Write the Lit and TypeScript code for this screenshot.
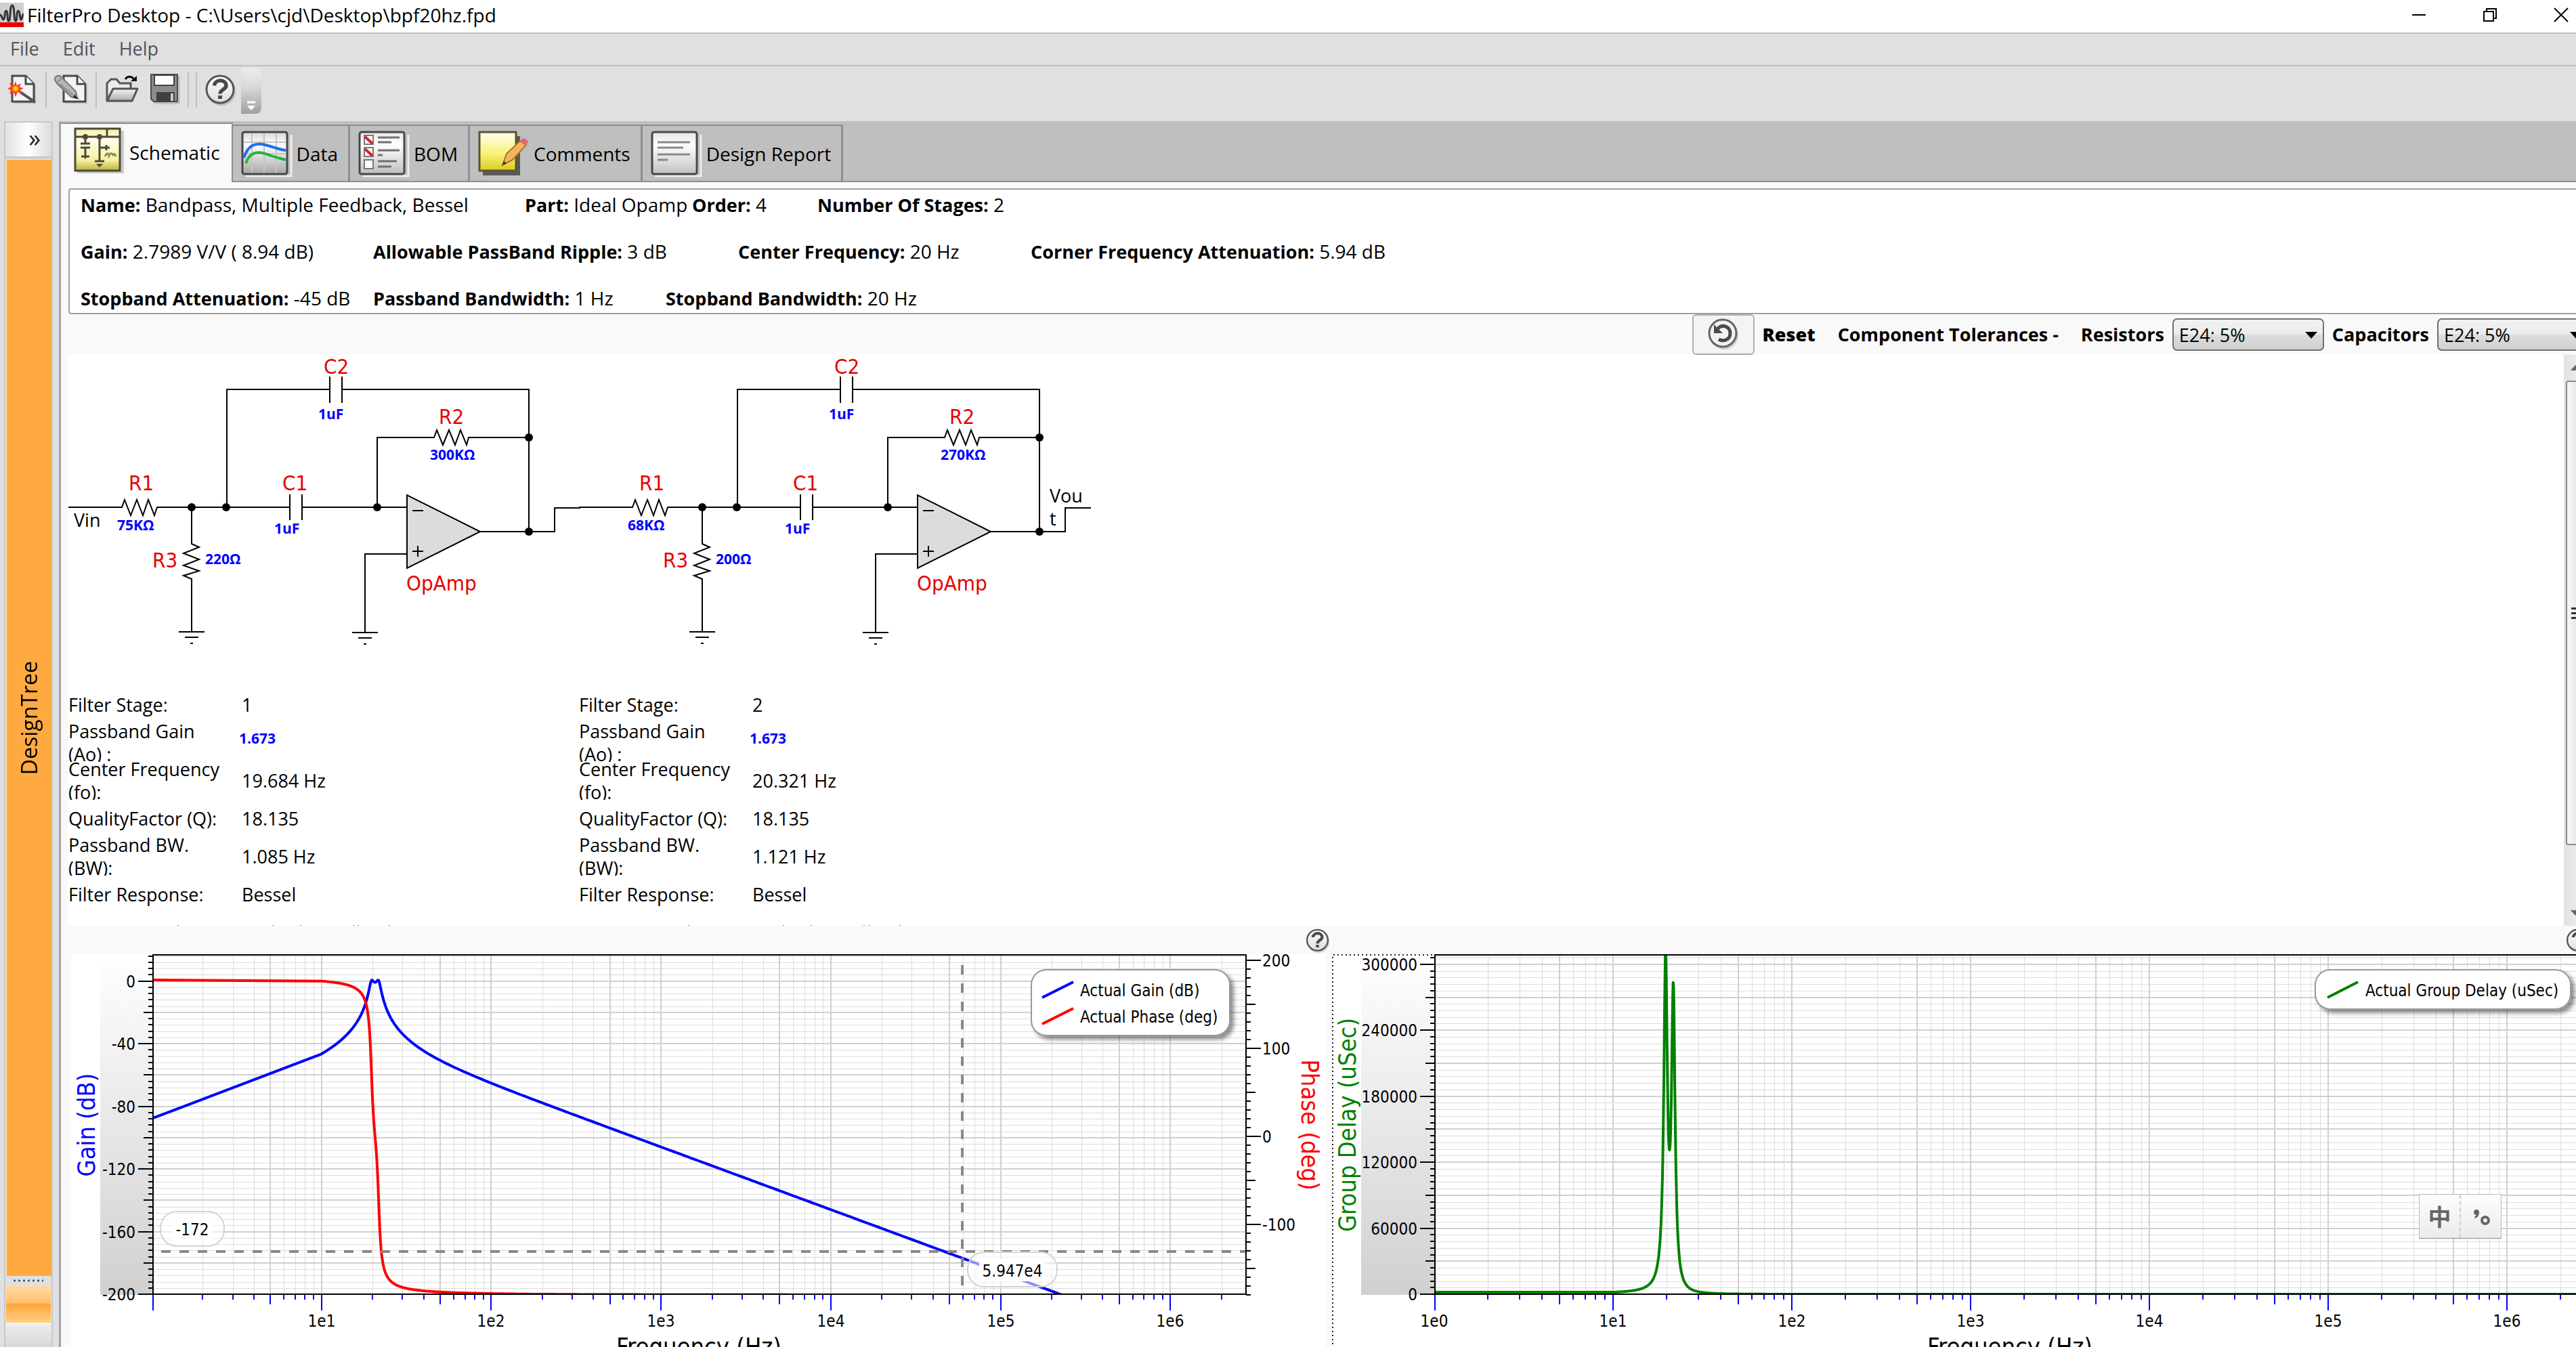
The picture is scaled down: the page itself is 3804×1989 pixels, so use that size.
import { LitElement, html, svg, css } from "lit";
import { customElement, property } from "lit/decorators.js";

const FONT = css`"Open Sans", "Noto Sans", "Noto Sans CJK SC", sans-serif`;
const TAHOMA = css`"DejaVu Sans Condensed", "Noto Sans", sans-serif`;

/* ---------- filter model ---------- */

const Q = 18.135;
const STAGE_FREQS = [19.68, 21.74];

const detune = (f: number, f0: number) => Q * (f / f0 - f0 / f);
const gainDb = (f: number) =>
  STAGE_FREQS.reduce((s, f0) => s - 10 * Math.log10(1 + detune(f, f0) ** 2), 11.8);
const phaseDeg = (f: number) =>
  STAGE_FREQS.reduce((s, f0) => s - (Math.atan(detune(f, f0)) * 180) / Math.PI, 0);
const delayUs = (f: number) =>
  STAGE_FREQS.reduce(
    (s, f0) => s + (1e6 * Q * (1 / f0 + f0 / (f * f))) / (1 + detune(f, f0) ** 2) / (2 * Math.PI),
    0
  );

function curve(
  fn: (f: number) => number,
  xOf: (f: number) => number,
  yOf: (v: number) => number,
  start: [number, number],
  maxExp: number
): string {
  const pts = [`${start[0]},${start[1]}`];
  for (let e = 1; e <= maxExp; e += e < 1.6 ? 0.002 : 0.02) {
    const f = 10 ** e;
    pts.push(`${xOf(f).toFixed(1)},${yOf(fn(f)).toFixed(1)}`);
  }
  return pts.join(" ");
}

/* ---------- icons ---------- */

const pageShape = (x: number) => svg`
  <path d="M${x + 2} 8H${x + 23}L${x + 35} 20V46H${x + 2}Z" fill="#999" opacity=".35"/>
  <path d="M${x} 5H${x + 20}L${x + 32} 17V43H${x}Z" fill="#f4f4f4" stroke="#4a4a4a" stroke-width="3"/>
  <path d="M${x + 20} 5V17H${x + 32}" fill="#fff" stroke="#4a4a4a" stroke-width="3"/>`;

const helpMark = (id: string) => html`
  <svg class="help-mark" viewBox="0 0 52 52" aria-hidden="true">
    <defs>
      <linearGradient id=${id} x1="0" y1="0" x2="0" y2="1">
        <stop offset="0" stop-color="#fff" /><stop offset="1" stop-color="#ddd" />
      </linearGradient>
    </defs>
    <circle cx="26" cy="28" r="21" fill="#999" opacity=".45" />
    <circle cx="24" cy="25" r="20" fill="url(#${id})" stroke="#555" stroke-width="3" />
    <path d="M15.500 19.500C16 9.500 33 9.500 33 19.500C33 25 24 25 24 31.500" fill="none" stroke="#4a4a4a" stroke-width="5.500" />
    <rect x="21" y="34" width="6" height="5" fill="#4a4a4a" />
  </svg>`;

const toolIcons = {
  new: html`<svg viewBox="0 0 52 52" aria-hidden="true">
    ${pageShape(13)}
    <path d="M25 29L47 44" stroke="#555" stroke-width="4" />
    <path d="M18 13L20 19L26 16L24 21.500L30 23L25 26L28 32L21 29L18 36L15 29L9 32L11 26L6 24L11 21L9 15L15.500 19Z" fill="#ff3b30" />
    <circle cx="18" cy="24" r="4" fill="#ffe600" stroke="#ff7a00" stroke-width="2" />
  </svg>`,
  edit: html`<svg viewBox="0 0 52 52" aria-hidden="true">
    ${pageShape(15)}
    <path d="M2 11C1 6 7 3 11 6L33 28L35 38L26 36L5 16Z" fill="#b5b5b5" stroke="#777" stroke-width="2" />
    <path d="M6 14L13 8M9 17L28 33" stroke="#8a8a8a" stroke-width="2" />
    <path d="M31 34L35 38L30 37Z" fill="#333" stroke="#333" stroke-width="2" />
  </svg>`,
  open: html`<svg viewBox="0 0 52 52" aria-hidden="true">
    <defs>
      <linearGradient id="folder" x1="0" y1="0" x2="0" y2="1">
        <stop offset="0" stop-color="#f6f6f6" /><stop offset="1" stop-color="#aaa" />
      </linearGradient>
    </defs>
    <path d="M5 42V16L11 10H19L24 16H40V24" fill="#ececec" stroke="#555" stroke-width="3" />
    <path d="M5 42L14 24H50L42 42Z" fill="url(#folder)" stroke="#555" stroke-width="3" stroke-linejoin="round" />
    <path d="M32 10C35 5 41 5 45 10" fill="none" stroke="#111" stroke-width="3" />
    <path d="M49 5V13H40Z" fill="#111" />
  </svg>`,
  save: html`<svg viewBox="0 0 52 52" aria-hidden="true">
    <path d="M10 6H51V47H12Z" fill="#999" opacity=".4" />
    <path d="M8 3H47V43H12L8 39Z" fill="#8c8c8c" stroke="#4a4a4a" stroke-width="2" />
    <rect x="13" y="4" width="29" height="15" fill="#fff" stroke="#444" stroke-width="2" />
    <rect x="16" y="29" width="27" height="14" fill="#404040" />
    <rect x="37" y="31" width="4" height="11" fill="#c8c8c8" />
  </svg>`,
};

const paperDefs = (id: string, a: string, b: string) => svg`
  <defs><linearGradient id=${id} x1="0" y1="0" x2="0" y2="1">
    <stop offset="0" stop-color=${a}/><stop offset=".3" stop-color="#fff" stop-opacity=".9"/><stop offset="1" stop-color=${b}/>
  </linearGradient></defs>`;

const tabIcons = {
  schematic: html`<svg viewBox="0 0 72 68" aria-hidden="true">
    <defs><linearGradient id="sch" x1="0" y1="0" x2="0" y2="1">
      <stop offset="0" stop-color="#f5efa0" /><stop offset=".25" stop-color="#fffef0" />
      <stop offset=".75" stop-color="#f6f1a0" /><stop offset="1" stop-color="#bdb03c" />
    </linearGradient></defs>
    <rect x="5" y="5" width="69" height="63" fill="#888" opacity=".4" />
    <rect x="2" y="2" width="66" height="62" fill="url(#sch)" stroke="#4a4a3c" stroke-width="3" />
    <path d="M2 14H68M49 2V14M17 14V24M10 24H24M10 30H24M17 30V43M11 43H23M38 14V51M31 50H45M38 30H53M48 26V34" fill="none" stroke="#4f4a33" stroke-width="3" />
    <circle cx="17" cy="14" r="4" fill="#4f4a33" /><circle cx="38" cy="14" r="4" fill="#4f4a33" />
    <path d="M33 54H43L38 59ZM14 43H20L17 47Z" fill="#4f4a33" />
    <path d="M46 43C49 37 51 38 52 42C54 37 57 38 58 42C59 38 61 39 62 43" fill="none" stroke="#8f8a5a" stroke-width="3" />
  </svg>`,
  data: html`<svg viewBox="0 0 72 68" aria-hidden="true">
    ${paperDefs("dat", "#d8d8d8", "#a5a5a5")}
    <path d="M6 67H74V6" fill="none" stroke="#eee" stroke-width="3" />
    <rect x="2" y="2" width="66" height="62" rx="3" fill="#f3f3f3" />
    <rect x="2" y="2" width="66" height="62" rx="3" fill="url(#dat)" stroke="#484848" stroke-width="3" />
    <path d="M16 4V62M34 4V62M52 4V62M4 17H66M4 34H66M4 49H66" stroke="#c4c4c4" stroke-width="2" />
    <path d="M4 40C10 22 20 17 36 21C48 24 56 28 66 29" fill="none" stroke="#1c6ef2" stroke-width="4" />
    <path d="M7 48C12 34 21 29 36 34C48 39 56 40 66 43" fill="none" stroke="#24b53a" stroke-width="4" />
  </svg>`,
  bom: html`<svg viewBox="0 0 72 68" aria-hidden="true">
    ${paperDefs("bom", "#e8e8e8", "#bdbdbd")}
    <path d="M6 67H74V6" fill="none" stroke="#eee" stroke-width="3" />
    <rect x="2" y="2" width="66" height="62" rx="3" fill="#f3f3f3" />
    <rect x="2" y="2" width="66" height="62" rx="3" fill="url(#bom)" stroke="#484848" stroke-width="3" />
    <g fill="#fff" stroke="#777" stroke-width="2">
      <rect x="9" y="7" width="13" height="13" /><rect x="9" y="25" width="13" height="13" /><rect x="9" y="43" width="13" height="13" />
    </g>
    <path d="M10 9L21 19M10 27L21 37" stroke="#d8232a" stroke-width="4" />
    <path d="M29 10H61M29 17H49M29 29H61M29 36H36M29 45H57M29 53H49" stroke="#707070" stroke-width="3" />
  </svg>`,
  comments: html`<svg viewBox="0 0 72 68" aria-hidden="true">
    <defs><linearGradient id="note" x1="0" y1="0" x2="0" y2="1">
      <stop offset="0" stop-color="#fffff0" /><stop offset=".55" stop-color="#faf27a" /><stop offset="1" stop-color="#d8cc20" />
    </linearGradient></defs>
    <path d="M7 8H62V66H7Z" fill="#5a5a5a" />
    <path d="M2 2H56V59H2Z" fill="url(#note)" stroke="#5a5630" stroke-width="3" />
    <path d="M36 51L42 34L62 15L71 21L51 43Z" fill="#f2b45c" stroke="#a8742c" stroke-width="2" />
    <path d="M62 15L66 11Q73 12 74 17L71 21Z" fill="#e8667a" />
    <path d="M36 51L38 45L42 48Z" fill="#333" />
  </svg>`,
  report: html`<svg viewBox="0 0 72 68" aria-hidden="true">
    ${paperDefs("rep", "#e4e4e4", "#c0c0c0")}
    <path d="M6 67H74V6" fill="none" stroke="#eee" stroke-width="3" />
    <rect x="2" y="2" width="66" height="62" rx="3" fill="#f3f3f3" />
    <rect x="2" y="2" width="66" height="62" rx="3" fill="url(#rep)" stroke="#484848" stroke-width="3" />
    <path d="M10 17H58M10 25H48M10 35H58M10 43H25" stroke="#8a8a8a" stroke-width="3" />
  </svg>`,
};

/* ---------- schematic ---------- */

interface Stage {
  r1: string;
  r2: string;
  r3: string;
  c1: string;
  c2: string;
  rows: [string, string][];
}

const STAGES: Stage[] = [
  {
    r1: "75KΩ", r2: "300KΩ", r3: "220Ω", c1: "1uF", c2: "1uF",
    rows: [
      ["Filter Stage:", "1"],
      ["Passband Gain (Ao) :", "1.673"],
      ["Center Frequency (fo):", "19.684 Hz"],
      ["QualityFactor (Q):", "18.135"],
      ["Passband BW. (BW):", "1.085 Hz"],
      ["Filter Response:", "Bessel"],
    ],
  },
  {
    r1: "68KΩ", r2: "270KΩ", r3: "200Ω", c1: "1uF", c2: "1uF",
    rows: [
      ["Filter Stage:", "2"],
      ["Passband Gain (Ao) :", "1.673"],
      ["Center Frequency (fo):", "20.321 Hz"],
      ["QualityFactor (Q):", "18.135"],
      ["Passband BW. (BW):", "1.121 Hz"],
      ["Filter Response:", "Bessel"],
    ],
  },
];

@customElement("filter-schematic")
class FilterSchematic extends LitElement {
  static styles = css`
    :host { display: block; background: #fff; }
    .drawing { display: block; width: 1560px; height: 489px; }
    .wire { fill: none; stroke: #000; stroke-width: 2; }
    .part { font: 31px ${TAHOMA}; fill: #e60000; }
    .value { font: bold 21px ${FONT}; fill: #0000ff; }
    .port { font: 27px ${FONT}; fill: #000; }
    .stages { display: flex; font: 27px/34px ${FONT}; color: #000; }
    table { width: 754px; table-layout: fixed; border-collapse: collapse; }
    th, td { padding: 0; font-weight: 400; text-align: left; }
    th { width: 252px; }
    td { padding-left: 4px; }
    td.editable { padding-left: 0; }
    .clip { display: flex; align-items: center; height: 56px; overflow: hidden; }
    .clip.label { width: 236px; }
    .clip.gain { box-sizing: border-box; font-weight: 700; font-size: 21px; color: #0000ff; padding-bottom: 14px; }
    .cut { display: block; width: 1560px; height: 18px; }
  `;

  private stage(s: Stage, i: number) {
    const ground = (x: number, y: number) =>
      svg`<path class="wire" d="M${x - 19} ${y}H${x + 19}M${x - 10} ${y + 8}H${x + 10}M${x - 2} ${y + 17}H${x + 2}"/>`;
    return svg`<g transform="translate(${i * 754} 0)">
      <path class="wire" d="M101 749H180L184 738L193 761L202 738L211 761L219 738L228 761L232 749H428M446 749H601
        M428 730V768M446 730V768
        M335 749V575H487M505 575H781V785M487 556V595M505 556V595
        M557 749V646H641L645 635L654 657L663 635L672 657L680 635L689 657L692 646H781
        M283 749V803L294 808L271 817L294 826L271 835L294 843L271 850L283 855V933
        M709 785H819V750H857
        M601 818H539V934"/>
      <path d="M601 731V839L709 785Z" fill="#dcdcdc" stroke="#000" stroke-width="2"/>
      <path class="wire" d="M609 754H625M609 814H625M617 806V822"/>
      ${ground(283, 933)}${ground(539, 934)}
      <circle cx="283" cy="749" r="6"/><circle cx="334" cy="749" r="6"/><circle cx="557" cy="749" r="6"/>
      <circle cx="781" cy="646" r="6"/><circle cx="781" cy="785" r="6"/>
      <text class="part" x="190" y="724">R1</text><text class="value" x="173" y="783">${s.r1}</text>
      <text class="part" x="417" y="724">C1</text><text class="value" x="405" y="788">${s.c1}</text>
      <text class="part" x="478" y="552">C2</text><text class="value" x="470" y="619">${s.c2}</text>
      <text class="part" x="648" y="626">R2</text><text class="value" x="635" y="679">${s.r2}</text>
      <text class="part" x="225" y="838">R3</text><text class="value" x="303" y="833">${s.r3}</text>
      <text class="part" x="600" y="872">OpAmp</text>
    </g>`;
  }

  render() {
    const specks = [262, 402, 443, 521, 528, 574];
    return html`
      <svg class="drawing" viewBox="101 524 1560 489" role="img" aria-label="Two stage band pass filter">
        ${STAGES.map((s, i) => this.stage(s, i))}
        <text class="port" x="109" y="778">Vin</text>
        <text class="port" x="1550" y="742">Vou</text>
        <text class="port" x="1550" y="776">t</text>
      </svg>
      <div class="stages">
        ${STAGES.map(
          (s) => html`<table>
            ${s.rows.map(
              ([k, v], i) => html`<tr>
                <th scope="row"><div class="clip label">${k}</div></th>
                <td class=${i === 1 ? "editable" : ""}><div class="clip ${i === 1 ? "gain" : ""}">${v}</div></td>
              </tr>`
            )}
          </table>`
        )}
      </div>
      <svg class="cut" viewBox="101 1349 1560 18" aria-hidden="true">
        ${[0, 754].map((dx) => specks.map((x) => svg`<rect x=${x + dx} y="1366" width="2" height="1" fill="#888"/>`))}
      </svg>
    `;
  }
}

/* ---------- charts ---------- */

interface Plot {
  x0: number;
  left: number;
  right: number;
  decade: number;
}

const TOP = 1409;
const BOTTOM = 1911;
const PLOT_STYLES = css`
  :host { display: block; min-width: 0; }
  .strip { display: flex; justify-content: flex-end; height: 40px; padding: 2px 6px 0 0; }
  .help { width: 34px; height: 34px; padding: 0; border: 0; background: none; }
  .help-mark { display: block; width: 40px; height: 40px; }
  .plot { display: block; width: 100%; height: auto; }
  .tick { font: 24px ${TAHOMA}; fill: #000; }
  .title { font: 36px ${TAHOMA}; text-anchor: middle; }
  .mid { text-anchor: middle; }
  .end { text-anchor: end; }
  .minor { stroke: #dcdcdc; stroke-width: 1; fill: none; }
  .major { stroke: #d0d0d0; stroke-width: 2; fill: none; }
  .axis { stroke: #000; stroke-width: 2; fill: none; }
  .freq { stroke: #0000ff; stroke-width: 2; fill: none; }
  .trace { fill: none; stroke-width: 4; stroke-linejoin: round; }
  .cursor { fill: none; stroke: #888; stroke-width: 4; stroke-dasharray: 14 13; }
`;

function freqAxis(p: Plot) {
  let minor = "";
  let major = "";
  let ticks = "";
  for (let d = 0; d < 7; d++) {
    for (let m = 1; m < 10; m++) {
      const x = Math.round(p.x0 + p.decade * (d + Math.log10(m)));
      if (x > p.right) continue;
      const line = `M${x} ${TOP}V${BOTTOM}`;
      if (x > p.left) {
        if (m === 1 || m === 5) major += line;
        else minor += line;
      }
      ticks += `M${Math.max(x, p.left)} ${BOTTOM + 1}v${m === 1 ? 23 : m === 5 ? 14 : 7}`;
    }
  }
  return { minor, major, ticks };
}

function levelAxis(from: number, to: number, step: number, mid: number, big: number, yOf: (v: number) => number) {
  const minor: number[] = [];
  const majors: number[] = [];
  const marks: { y: number; len: number; v: number }[] = [];
  for (let v = from; v <= to; v += step) {
    const y = Math.round(yOf(v));
    const len = v % big === 0 ? 22 : v % mid === 0 ? 14 : 7;
    marks.push({ y, len, v });
    (len > 7 ? majors : minor).push(y);
  }
  return { minor, majors, marks };
}

function grid(p: Plot, yMinor: number[], yMajor: number[]) {
  const fx = freqAxis(p);
  const h = (ys: number[]) => ys.map((y) => `M${p.left} ${y}H${p.right}`).join("");
  return svg`
    <rect x=${p.left} y=${TOP} width=${p.right - p.left} height=${BOTTOM - TOP} fill="#fff"/>
    <path class="minor" shape-rendering="crispEdges" d=${h(yMinor) + fx.minor}/>
    <path class="major" d=${h(yMajor) + fx.major}/>
    <path class="freq" d=${fx.ticks}/>`;
}

const axisShade = svg`<linearGradient id="shade" x1="0" y1="0" x2="0" y2="1">
  <stop offset="0" stop-color="#fff"/><stop offset="1" stop-color="#d0d0d0"/></linearGradient>
  <filter id="drop" x="-10%" y="-20%" width="125%" height="160%">
    <feDropShadow dx="5" dy="5" stdDeviation="3" flood-color="#000" flood-opacity=".45"/></filter>`;

@customElement("gain-chart")
class GainChart extends LitElement {
  static styles = PLOT_STYLES;

  render() {
    const p: Plot = { x0: 224, left: 226, right: 1840, decade: 250.7 };
    const xOf = (f: number) => p.x0 + p.decade * Math.log10(f);
    const yGain = (v: number) => 1448.7 - v * 2.3125;
    const yPhase = (v: number) => 1677.7 - v * 1.301;
    const gain = levelAxis(-200, 16, 4, 20, 40, yGain);
    const phase = levelAxis(-180, 200, 10, 50, 100, yPhase);
    return html`
      <div class="strip"><button class="help" aria-label="Help on gain and phase">${helpMark("h1")}</button></div>
      <svg class="plot" viewBox="105 1409 1862 600" role="img" aria-label="Gain and phase over frequency">
        <defs>${axisShade}<clipPath id="area"><rect x="226" y="1409" width="1614" height="502"/></clipPath></defs>
        <rect x="105" y="1409" width="1853" height="600" fill="#fff"/>
        <rect x="148" y="1409" width="78" height="503" fill="url(#shade)"/>
        ${grid(p, gain.minor, gain.majors)}
        <path class="axis" d=${gain.marks.map((m) => `M${226 - m.len} ${m.y}H226`).join("") +
          phase.marks.map((m) => `M1840 ${m.y}h${m.len}`).join("")}/>
        ${gain.marks.filter((m) => m.len === 22).map((m) => svg`<text class="tick end" x="200" y=${m.y + 9}>${m.v}</text>`)}
        ${phase.marks.filter((m) => m.len === 22).map((m) => svg`<text class="tick" x="1864" y=${m.y + 9}>${m.v}</text>`)}
        ${[1, 2, 3, 4, 5, 6].map((d) => svg`<text class="tick mid" x=${Math.round(p.x0 + p.decade * d)} y="1959">1e${d}</text>`)}
        <g clip-path="url(#area)">
          <polyline class="trace" stroke="#0000ff" points=${curve(gainDb, xOf, yGain, [226, 1651], 6)}/>
          <polyline class="trace" stroke="#ff0000" points=${curve(phaseDeg, xOf, yPhase, [226, 1447], 6)}/>
        </g>
        <rect class="axis" x="226" y="1410" width="1614" height="501"/>
        <path class="cursor" d="M238 1848H1839"/>
        <path class="cursor" d="M1421 1425V1898"/>
        <g fill="#fff" fill-opacity=".55" stroke="#d3d3d3" stroke-width="2">
          <rect x="237" y="1789" width="94" height="51" rx="24"/>
          <rect x="1429" y="1849" width="132" height="51" rx="24"/>
        </g>
        <rect x="254" y="1798" width="60" height="34" fill="#fff"/>
        <rect x="1446" y="1859" width="97" height="33" fill="#fff"/>
        <text class="tick mid" x="284" y="1824">-172</text>
        <text class="tick mid" x="1495" y="1885">5.947e4</text>
        <rect x="1523" y="1432" width="293" height="97" rx="22" fill="#fff" stroke="#999" stroke-width="2" filter="url(#drop)"/>
        <path d="M1539 1473L1585 1450" stroke="#0000ff" stroke-width="4"/>
        <path d="M1539 1512L1585 1489" stroke="#ff0000" stroke-width="4"/>
        <text class="tick" x="1595" y="1471">Actual Gain (dB)</text>
        <text class="tick" x="1595" y="1510">Actual Phase (deg)</text>
        <text class="title" fill="#0000ff" transform="translate(140 1661) rotate(-90)">Gain (dB)</text>
        <text class="title" fill="#ff0000" transform="translate(1922 1661) rotate(90)">Phase (deg)</text>
        <text class="title" x="1032" y="2001">Frequency (Hz)</text>
      </svg>
    `;
  }
}

@customElement("delay-chart")
class DelayChart extends LitElement {
  static styles = PLOT_STYLES;

  render() {
    const p: Plot = { x0: 2118, left: 2119, right: 3828, decade: 264 };
    const xOf = (f: number) => p.x0 + p.decade * Math.log10(f);
    const yOf = (v: number) => 1911 - v * 0.001624;
    const level = levelAxis(0, 306000, 6000, 30000, 60000, yOf);
    return html`
      <div class="strip"><button class="help" aria-label="Help on group delay">${helpMark("h2")}</button></div>
      <svg class="plot" viewBox="1967 1409 1861 600" role="img" aria-label="Group delay over frequency">
        <defs>${axisShade}<clipPath id="area"><rect x="2119" y="1409" width="1709" height="502"/></clipPath></defs>
        <rect x="1967" y="1409" width="1861" height="600" fill="#fff"/>
        <rect x="2010" y="1409" width="109" height="503" fill="url(#shade)"/>
        ${grid(p, level.minor, level.majors)}
        <path d="M1968 2009V1410H3828" fill="none" stroke="#222" stroke-width="2" stroke-dasharray="2 4"/>
        <path class="axis" d=${level.marks.map((m) => `M${2119 - m.len} ${m.y}H2119`).join("")}/>
        ${level.marks.filter((m) => m.len === 22).map((m) => svg`<text class="tick end" x="2093" y=${m.y + 9}>${m.v}</text>`)}
        ${[0, 1, 2, 3, 4, 5, 6].map((d) => svg`<text class="tick mid" x=${Math.round(p.x0 + p.decade * d)} y="1959">1e${d}</text>`)}
        <polyline class="trace" clip-path="url(#area)" stroke="#008000" points=${curve(delayUs, xOf, yOf, [2119, 1908], 6.4)}/>
        <path class="axis" d="M3828 1410H2119V1911H3828"/>
        <rect x="3419" y="1432" width="377" height="58" rx="22" fill="#fff" stroke="#999" stroke-width="2" filter="url(#drop)"/>
        <path d="M3437 1473L3482 1450" stroke="#008000" stroke-width="4"/>
        <text class="tick" x="3493" y="1471">Actual Group Delay (uSec)</text>
        <text class="title" fill="#008000" transform="translate(2002 1661) rotate(-90)">Group Delay (uSec)</text>
        <text class="title" x="2968" y="2001">Frequency (Hz)</text>
      </svg>
    `;
  }
}

/* ---------- tolerance drop-down ---------- */

@customElement("tolerance-select")
class ToleranceSelect extends LitElement {
  @property() label = "";

  static styles = css`
    :host { display: flex; align-items: center; gap: 12px; }
    label { font-weight: 700; }
    .box { position: relative; display: flex; }
    select {
      appearance: none; box-sizing: border-box; width: 224px; height: 48px; padding: 0 8px;
      font: 27px ${FONT}; color: #000; border: 2px solid #707070; border-radius: 7px;
      background: linear-gradient(#f2f2f2, #ebebeb 50%, #dddddd 50%, #cfcfcf);
    }
    .arrow { position: absolute; right: 10px; top: 20px; width: 18px; height: 10px; pointer-events: none; }
  `;

  render() {
    return html`
      <label for="tolerance">${this.label}</label>
      <span class="box">
        <select id="tolerance"><option>E24: 5%</option></select>
        <svg class="arrow" viewBox="0 0 18 10" aria-hidden="true"><path d="M0 0H18L9 10Z" /></svg>
      </span>
    `;
  }
}

/* ---------- window ---------- */

@customElement("app-root")
class AppRoot extends LitElement {
  static styles = css`
    :host {
      position: relative; display: flex; flex-direction: column; height: 100vh; overflow: hidden;
      background: #e0e0e0; font: 27px/36px ${FONT}; color: #000;
    }
    button { font: inherit; color: inherit; background: none; border: 0; padding: 0; }
    .titlebar { display: flex; align-items: center; height: 48px; background: #fff; border-bottom: 2px solid #bfbfbf; }
    .logo { width: 35px; height: 36px; margin-right: 5px; margin-top: -4px; }
    .titlebar h1 { flex: 1; margin: 0; font-size: 28px; font-weight: 400; line-height: 44px; padding-bottom: 4px; }
    .winbtn { width: 105px; height: 42px; display: grid; place-items: center; }
    .winbtn svg { width: 24px; height: 24px; fill: none; stroke: #000; stroke-width: 2; }
    .winbtns { display: flex; margin: -4px -30px 0 0; }
    .menubar { display: flex; gap: 35px; align-items: center; height: 44px; padding: 0 0 2px 15px; border-bottom: 2px solid #bfbfbf; color: #4c545e; }
    .toolbar { display: flex; gap: 10px; height: 81px; padding-left: 5px; }
    .tool { width: 52px; height: 52px; margin-top: 9px; }
    .tool svg { display: block; width: 52px; height: 52px; }
    .sep { width: 2px; height: 52px; margin-top: 9px; background: #bfbfbf; }
    .overflow { width: 30px; height: 68px; margin: 2px 0 0 -7px; border-radius: 0 8px 8px 0; background: linear-gradient(#ececec, #dadada 40%, #a0a0a0); display: flex; justify-content: center; align-items: flex-end; }
    .overflow svg { width: 16px; height: 22px; }
    .body { flex: 1; min-height: 0; display: flex; }

    .side { box-sizing: border-box; width: 72px; margin: 0 9px 0 6px; display: flex; flex-direction: column; border: 2px solid #c4c8cf; border-bottom: 0; }
    .expand { height: 53px; background: linear-gradient(90deg, #e2e2e2, #fff 50%, #dcdcdc); border-bottom: 3px solid #c4c8cf; text-align: right; padding-right: 16px; font-size: 36px; line-height: 44px; padding-bottom: 4px; color: #222; }
    .tree { height: 1648px; margin-top: 2px; background: #ffaa40; border-left: 2px solid #ffe0b4; display: grid; place-items: center; font-size: 32px; }
    .tree span { writing-mode: vertical-rl; transform: rotate(180deg); line-height: 64px; }
    .grip { height: 14px; background: radial-gradient(circle, #444 1px, transparent 2px) 12px 0 / 7px 14px; border: solid #e0e0e0; border-width: 0 12px; }
    .nav { height: 54px; background: linear-gradient(#ffd9a0, #ffc070 45%, #ffa63a 50%, #ffd08a); border: 1px solid #ffe0b4; }
    .foot { flex: 1; background: linear-gradient(#ececec, #d8d8d8); border-top: 1px solid #fff; }

    .main { flex: 1; min-width: 0; margin-right: -24px; display: flex; flex-direction: column; border-left: 3px solid #a2a2a6; border-top: 2px solid #bfbfbf; background: #f9f9f9; }
    .main > * { flex: none; }
    .tabs { display: flex; align-items: flex-end; height: 86px; background: #bfbfbf; border-bottom: 2px solid #8e8e93; font-size: 28px; }
    .tab { box-sizing: border-box; display: flex; align-items: center; gap: 10px; height: 83px; padding: 0 15px 0 12px; border: solid #8e8e93; border-width: 2px 3px 0 0; }
    .tab svg { width: 72px; height: 68px; overflow: visible; }
    .tab.on { gap: 10px; height: 88px; margin-bottom: -2px; padding: 0 17px 8px 19px; background: #f9f9f9; border-right-width: 2px; }
    .tab.on span { padding-top: 6px; }

    .info { margin: 9px 0 0 11px; height: 178px; padding: 4px 0 0 16px; background: #fff; border: 2px solid #a0a0a0; border-radius: 4px; display: grid; grid-auto-rows: 36px; row-gap: 33px; white-space: nowrap; font-size: 28px; }
    .info strong { font-size: 27px; }
    .row { display: grid; }
    .row1 { grid-template-columns: 656px 247px 185px 1fr; }
    .row2 { grid-template-columns: 432px 539px 432px 1fr; }
    .row3 { grid-template-columns: 432px 432px 1fr; }

    .options { display: flex; align-items: center; justify-content: flex-end; height: 60px; padding-right: 5px; font-weight: 700; white-space: nowrap; }
    .reset { display: flex; align-items: center; gap: 12px; margin-right: 33px; }
    .reset i { box-sizing: border-box; width: 92px; height: 60px; border: 2px solid #a9b0b5; border-radius: 6px; background: #f4f4f4; display: grid; place-items: center; }
    .reset svg { width: 52px; height: 52px; }
    .options .caption { margin-right: 33px; }
    .options tolerance-select + tolerance-select { margin-left: 12px; }

    .sheet { display: flex; margin: 0 8px 0 11px; }
    .sheet filter-schematic { flex: 1; min-width: 0; }
    .scroll { width: 34px; display: flex; flex-direction: column; align-items: center; background: linear-gradient(90deg, #e2e2e2, #f0f0f0); }
    .scroll svg { width: 14px; height: 8px; margin: 15px 0; }
    .thumb { box-sizing: border-box; width: 28px; height: 686px; border: 2px solid #8c8c8c; border-radius: 4px; background: linear-gradient(90deg, #f6f6f6, #dedede); display: grid; place-content: center; gap: 4px; }
    .thumb b { width: 13px; height: 3px; background: #333; }
    .track { flex: 1; }
    .charts { display: grid; grid-template-columns: 1862fr 1861fr; margin-left: 15px; }

    .ime { position: absolute; right: 110px; bottom: 160px; display: flex; width: 120px; height: 64px; border: 1px solid #bbb; border-bottom-color: #888; background: linear-gradient(#fdfdfd, #ebebeb); color: #666; font: 700 34px/62px "Noto Sans CJK SC", sans-serif; }
    .ime button { flex: 1; display: grid; place-items: center; }
    .ime button + button { border-left: 2px dashed #ccc; }
    .ime svg { width: 30px; height: 30px; }
  `;

  private pair(k: string, v: string) {
    return html`<span><strong>${k}</strong> ${v}</span>`;
  }

  render() {
    return html`
      <header class="titlebar">
        <svg class="logo" viewBox="0 0 35 36" aria-hidden="true">
          <rect width="35" height="30" fill="#cfcfcf" /><rect y="29" width="35" height="7" fill="#e60000" />
          <path d="M0 18C3 18 3 25 5 25C8 25 6 12 9 12C12 12 10 27 13 27C16 27 14 4 18 4C22 4 20 27 23 27C26 27 24 12 27 12C30 12 29 25 31 25C33 25 33 16 35 17" fill="none" stroke="#333" stroke-width="3" />
        </svg>
        <h1>FilterPro Desktop - C:\\Users\\cjd\\Desktop\\bpf20hz.fpd</h1>
        <div class="winbtns">
          <button class="winbtn" aria-label="Minimize"><svg viewBox="0 0 24 24"><path d="M2 12H22" /></svg></button>
          <button class="winbtn" aria-label="Restore"><svg viewBox="0 0 24 24"><path d="M3 7H17V21H3ZM7 7V3H21V17H17" /></svg></button>
          <button class="winbtn" aria-label="Close"><svg viewBox="0 0 24 24"><path d="M2 2L22 22M22 2L2 22" /></svg></button>
        </div>
      </header>
      <nav class="menubar"><button>File</button><button>Edit</button><button>Help</button></nav>
      <div class="toolbar">
        <button class="tool" aria-label="New design">${toolIcons.new}</button>
        <span class="sep"></span>
        <button class="tool" aria-label="Edit design">${toolIcons.edit}</button>
        <span class="sep"></span>
        <button class="tool" aria-label="Open">${toolIcons.open}</button>
        <button class="tool" aria-label="Save">${toolIcons.save}</button>
        <span class="sep"></span><span class="sep"></span>
        <button class="tool" aria-label="Help">${helpMark("h0")}</button>
        <button class="overflow" aria-label="Toolbar options">
          <svg viewBox="0 0 16 22" aria-hidden="true"><path d="M2 5H14" stroke="#fff" stroke-width="3" /><path d="M2 10H14L8 17Z" fill="#fff" /></svg>
        </button>
      </div>
      <div class="body">
        <aside class="side">
          <button class="expand" aria-label="Expand design tree">»</button>
          <div class="tree"><span>DesignTree</span></div>
          <div class="grip"></div>
          <div class="nav"></div>
          <div class="foot"></div>
        </aside>
        <main class="main">
          <div class="tabs" role="tablist">
            <button class="tab on" role="tab" aria-selected="true">${tabIcons.schematic}<span>Schematic</span></button>
            <button class="tab" role="tab">${tabIcons.data}<span>Data</span></button>
            <button class="tab" role="tab">${tabIcons.bom}<span>BOM</span></button>
            <button class="tab" role="tab">${tabIcons.comments}<span>Comments</span></button>
            <button class="tab" role="tab">${tabIcons.report}<span>Design Report</span></button>
          </div>
          <section class="info">
            <div class="row row1">
              ${this.pair("Name:", "Bandpass, Multiple Feedback, Bessel")}${this.pair("Part:", "Ideal Opamp")}
              ${this.pair("Order:", "4")}${this.pair("Number Of Stages:", "2")}
            </div>
            <div class="row row2">
              ${this.pair("Gain:", "2.7989 V/V ( 8.94 dB)")}${this.pair("Allowable PassBand Ripple:", "3 dB")}
              ${this.pair("Center Frequency:", "20 Hz")}${this.pair("Corner Frequency Attenuation:", "5.94 dB")}
            </div>
            <div class="row row3">
              ${this.pair("Stopband Attenuation:", "-45 dB")}${this.pair("Passband Bandwidth:", "1 Hz")}
              ${this.pair("Stopband Bandwidth:", "20 Hz")}
            </div>
          </section>
          <div class="options">
            <button class="reset">
              <i><svg viewBox="0 0 52 52" aria-hidden="true">
                <circle cx="27" cy="27" r="21" fill="#999" opacity=".4" />
                <circle cx="25" cy="24" r="20" fill="#f2f2f2" stroke="#666" stroke-width="3" />
                <path d="M18 17C24 10 36 14 36 24C36 34 26 37 19 33" fill="none" stroke="#4a4a4a" stroke-width="5" />
                <path d="M12 11V24H25Z" fill="#4a4a4a" />
              </svg></i><strong>Reset</strong>
            </button>
            <span class="caption">Component Tolerances -</span>
            <tolerance-select label="Resistors"></tolerance-select>
            <tolerance-select label="Capacitors"></tolerance-select>
          </div>
          <div class="sheet">
            <filter-schematic></filter-schematic>
            <div class="scroll" aria-hidden="true">
              <svg viewBox="0 0 14 8"><path d="M0 8H14L7 0Z" fill="#666" /></svg>
              <div class="thumb"><b></b><b></b><b></b></div>
              <div class="track"></div>
              <svg viewBox="0 0 14 8"><path d="M0 0H14L7 8Z" fill="#666" /></svg>
            </div>
          </div>
          <div class="charts">
            <gain-chart></gain-chart>
            <delay-chart></delay-chart>
          </div>
        </main>
      </div>
      <div class="ime">
        <button>中</button>
        <button aria-label="Punctuation">
          <svg viewBox="0 0 30 30" aria-hidden="true">
            <circle cx="8" cy="9" r="4" fill="#666" /><path d="M12 9Q12 16 6 18L5 16Q8 14 8 11Z" fill="#666" />
            <circle cx="21" cy="21" r="5" fill="none" stroke="#666" stroke-width="4" />
          </svg>
        </button>
      </div>
    `;
  }
}
